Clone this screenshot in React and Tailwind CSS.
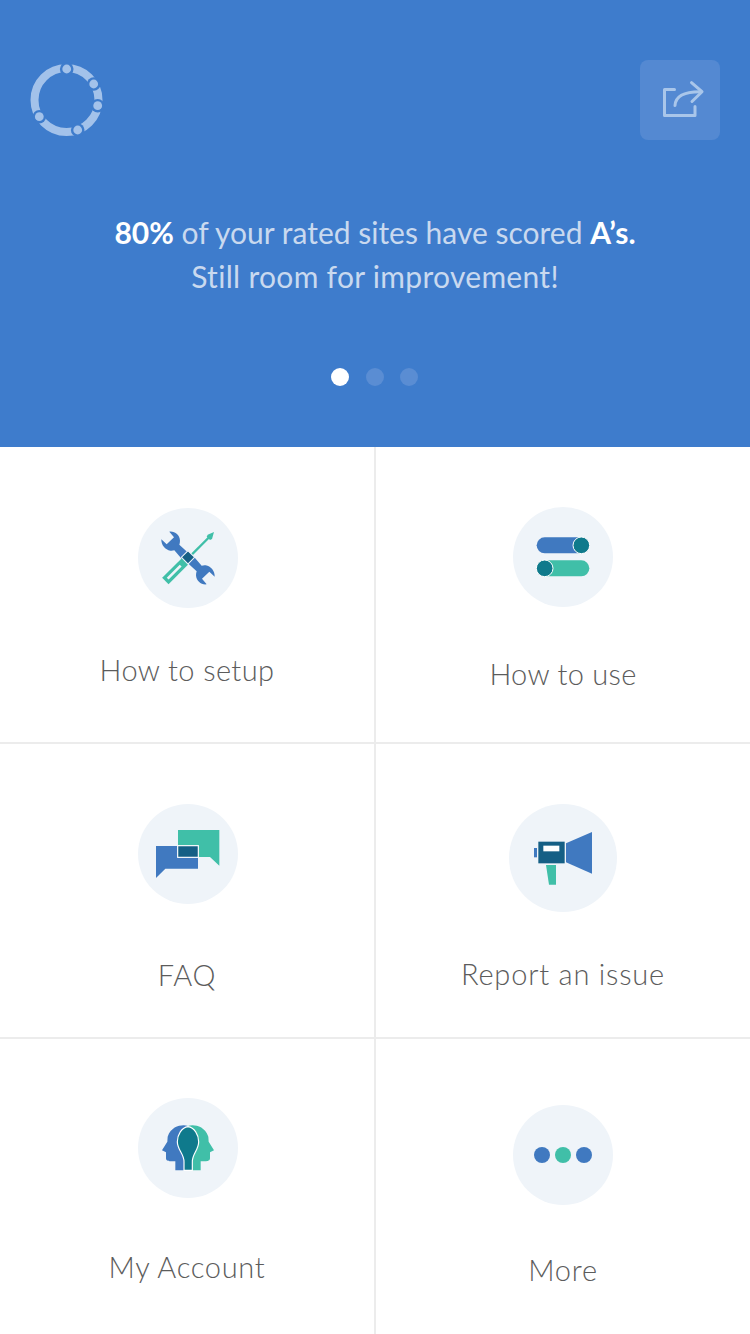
import React from 'react';

const BLUE = '#4079c0';
const TEAL = '#40bfa8';
const DARK = '#155f85';
const CYAN = '#0f7a8c';
const DISC = '#eff4f9';

function Logo() {
  const dots = [[66.7, 69], [93.7, 84], [97.7, 105.7], [77.7, 130], [39.3, 116.7]];
  return (
    <svg width="80" height="80" viewBox="30 60 80 80" className="block">
      <circle cx="66.5" cy="100" r="32" fill="none" stroke="#a3c2ea" strokeWidth="8" />
      {dots.map(([x, y]) => (
        <g key={x}>
          <circle cx={x} cy={y} r="6.8" fill="#3e7ccc" />
          <circle cx={x} cy={y} r="4.4" fill="#a3c2ea" />
        </g>
      ))}
    </svg>
  );
}

function ShareIcon() {
  return (
    <svg width="80" height="80" viewBox="640 60 80 80" fill="none" stroke="#a9c6ea" strokeWidth="3" strokeLinecap="round" strokeLinejoin="round">
      <path d="M674.5 89.5H664.500V115.500H695V106.500" />
      <path d="M675 105.500C675.500 96 684 91.500 701 91.700" />
      <path d="M691.500 82.700L702 91.700L692 101.500" />
    </svg>
  );
}

function Tools() {
  const head = 'M118 95C134 93 149 104 150 122C150 127 149 131 148 134L176 160L160 182L133 151C129 152 125 153 121 152C106 150 93 135 94 118L110 133L132 112Z';
  return (
    <svg width="100" height="100" viewBox="24 24 300 300">
      <path d={head} fill={BLUE} />
      <path d={head} fill={BLUE} transform="rotate(180 174 174)" />
      <path d="M106 243L165 184" stroke={TEAL} strokeWidth="27" />
      <path d="M113 236L152 197" stroke={DISC} strokeWidth="8" />
      <path d="M165 184L238 111" stroke={TEAL} strokeWidth="7" />
      <path d="M252 96L246 117L240 120L230 110L233 104Z" fill={TEAL} />
      <rect x="160" y="158" width="28" height="28" fill={DARK} stroke={DISC} strokeWidth="3" transform="rotate(45 174 172)" />
    </svg>
  );
}

function Toggles() {
  return (
    <svg width="100" height="100" viewBox="24 21 300 300">
      <rect x="95" y="112" width="158" height="48" rx="24" fill={BLUE} />
      <circle cx="229" cy="136" r="25" fill={CYAN} stroke="#fff" strokeWidth="3" />
      <rect x="95" y="181" width="158" height="48" rx="24" fill={TEAL} />
      <circle cx="119" cy="205" r="25" fill={CYAN} stroke="#fff" strokeWidth="3" />
    </svg>
  );
}

function Chat() {
  return (
    <svg width="100" height="100" viewBox="24 24 300 300">
      <path d="M144 102H268V209L240 183H144Z" fill={TEAL} />
      <path d="M78 150H204V218H106L78 246Z" fill={BLUE} />
      <rect x="143" y="149" width="62" height="35" fill={DARK} stroke="#fff" strokeWidth="3.500" />
    </svg>
  );
}

function Megaphone() {
  return (
    <svg width="108" height="108" viewBox="12 12 324 324">
      <rect x="87" y="144" width="9" height="28" fill={BLUE} />
      <rect x="100" y="125" width="79" height="65" fill={DARK} />
      <rect x="115" y="137" width="48" height="17" fill="#fff" />
      <path d="M183 130L261 96V221L183 187Z" fill={BLUE} />
      <path d="M123 195H153V254H132Z" fill={TEAL} />
    </svg>
  );
}

function Heads() {
  const side = 'M174 108C160 103 125 105 113 140L112 155L96 181L108 187V205C108 212 115 214 122 214H136V241H174Z';
  return (
    <svg width="100" height="100" viewBox="24 24 300 300">
      <path d={side} fill={BLUE} />
      <path d={side} fill={TEAL} transform="matrix(-1 0 0 1 348 0)" />
      <path d="M174 110C155 112 142 135 142 155C142 180 162 190 162 215V241H187V215C187 190 206 180 206 155C206 135 193 112 174 110Z" fill={CYAN} stroke="#fff" strokeWidth="3.500" />
    </svg>
  );
}

function Dots() {
  return (
    <div className="flex items-center gap-[5px]">
      <span className="w-4 h-4 rounded-full bg-[#4079c0]"></span>
      <span className="w-4 h-4 rounded-full bg-[#40bfa8]"></span>
      <span className="w-4 h-4 rounded-full bg-[#4079c0]"></span>
    </div>
  );
}

function Cell({ icon, label, className, discClass, labelClass }) {
  return (
    <div className={`flex flex-col items-center ${className}`}>
      <div className={`rounded-full bg-[#eff4f9] flex items-center justify-center ${discClass}`}>
        {icon}
      </div>
      <div className={`text-[29px] leading-[40px] font-light text-[#5c5c5c] ${labelClass}`}>{label}</div>
    </div>
  );
}

export default function App() {
  return (
    <div className="w-[750px] h-[1334px] overflow-hidden bg-white font-['Lato','Liberation_Sans',sans-serif]">
      <header className="h-[447px] bg-[#3e7ccc] flex flex-col">
        <div className="flex justify-between px-[30px] pt-[60px]">
          <Logo />
          <button className="w-20 h-20 rounded-lg bg-[#5489d2]">
            <ShareIcon />
          </button>
        </div>
        <p className="mt-[70px] text-center text-[30px] leading-[44px] text-[#c9d9ef]">
          <b className="font-bold text-white">80%</b> of your rated sites have scored <b className="font-bold text-white">A’s.</b>
          <br />
          <span className="tracking-[0.3px]">Still room for improvement!</span>
        </p>
        <div className="mt-[70px] pr-[2px] flex justify-center gap-4">
          <span className="w-[18px] h-[18px] mr-px rounded-full bg-white"></span>
          <span className="w-[18px] h-[18px] rounded-full bg-[#5a8dd3]"></span>
          <span className="w-[18px] h-[18px] rounded-full bg-[#5a8dd3]"></span>
        </div>
      </header>
      <main className="grid grid-cols-[376px_374px] grid-rows-[297px_295px_295px]">
        <Cell icon={<Tools />} label="How to setup" className="pt-[61px] border-r-2 border-b-2 border-[#ececec]" discClass="w-[100px] h-[100px] ml-[2px]" labelClass="mt-[42px] tracking-[0.4px]" />
        <Cell icon={<Toggles />} label="How to use" className="pt-[60px] border-b-2 border-[#ececec]" discClass="w-[100px] h-[100px]" labelClass="mt-[47px] tracking-[0.3px]" />
        <Cell icon={<Chat />} label="FAQ" className="pt-[60px] border-r-2 border-b-2 border-[#ececec]" discClass="w-[100px] h-[100px] ml-[2px]" labelClass="mt-[51px] tracking-[0.7px]" />
        <Cell icon={<Megaphone />} label="Report an issue" className="pt-[60px] border-b-2 border-[#ececec]" discClass="w-[108px] h-[108px]" labelClass="mt-[42px] tracking-[0.8px]" />
        <Cell icon={<Heads />} label="My Account" className="pt-[59px] border-r-2 border-[#ececec]" discClass="w-[100px] h-[100px] ml-[2px]" labelClass="mt-[49px] tracking-[0.7px]" />
        <Cell icon={<Dots />} label="More" className="pt-[66px]" discClass="w-[100px] h-[100px]" labelClass="mt-[45px] tracking-[0.75px]" />
      </main>
    </div>
  );
}
